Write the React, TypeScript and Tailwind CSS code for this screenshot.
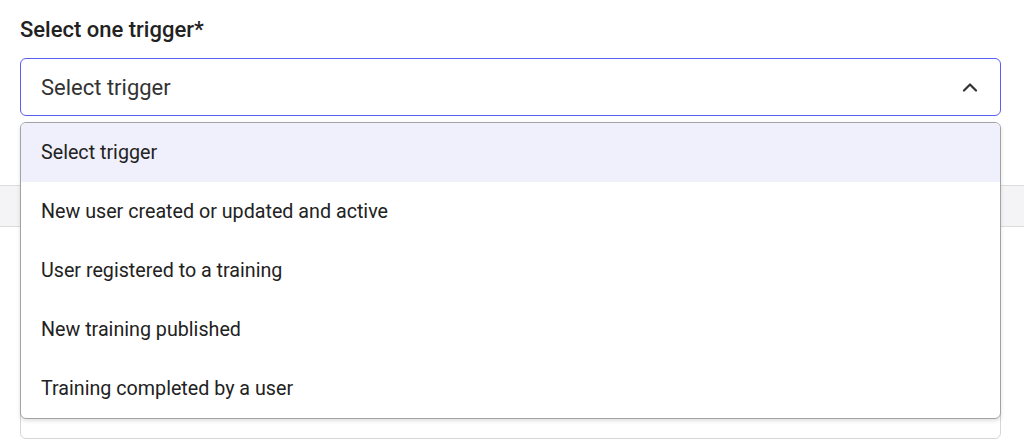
import React from 'react';

const options = [
  'Select trigger',
  'New user created or updated and active',
  'User registered to a training',
  'New training published',
  'Training completed by a user',
];

export default function App() {
  return (
    <div className="relative h-[445px] w-[1024px] overflow-hidden bg-white font-['Roboto',sans-serif] text-[#222]">
      <div className="pl-5 pr-[23px] pt-4">
        <label className="block h-7 text-[22px] font-medium leading-7 text-[#222]">Select one trigger*</label>
        <div className="relative mt-[14px]">
          <button className="flex h-[58px] w-full items-center justify-between rounded-md border border-[#5b5ef4] bg-white pl-5 pr-[22px] text-left text-[22px] text-[#333]">
            <span>Select trigger</span>
            <svg width="16" height="10" viewBox="0 0 16 10" fill="none" stroke="#333" strokeWidth="2.2" strokeLinecap="round" strokeLinejoin="round">
              <path d="M2 8.5 8 2.5l6 6" />
            </svg>
          </button>
          <ul className="absolute left-0 right-0 top-[64px] z-10 overflow-hidden rounded-md border border-[#a3a3a3] bg-white shadow-[0_2px_4px_rgba(0,0,0,0.12)]">
            {options.map((o, i) => (
              <li
                key={o}
                className={`flex h-[59px] items-center pl-5 text-[19.7px] text-[#222] ${i === 0 ? 'bg-[#eff0fb]' : ''}`}
              >
                {o}
              </li>
            ))}
          </ul>
        </div>
      </div>

      {/* content under the open menu */}
      <div className="mt-[69px] h-[42px] border-y border-[#dcdcdc] bg-[#f4f4f6]" />
      <div className="pl-5 pr-[23px] pt-[154px]">
        <div className="h-[58px] rounded-md border border-[#d6d6d6] bg-white" />
      </div>
    </div>
  );
}
